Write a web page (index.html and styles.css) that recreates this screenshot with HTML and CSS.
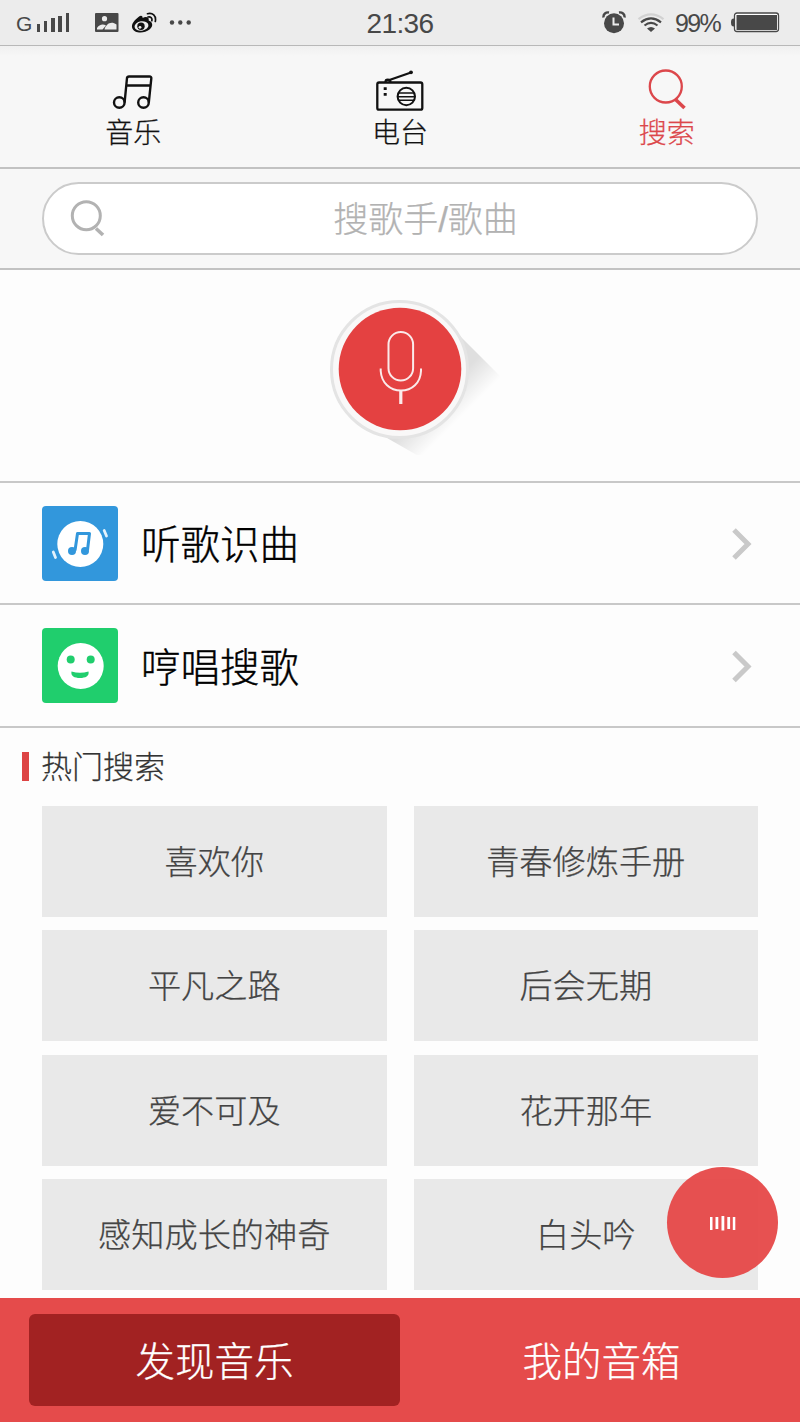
FILE: index.html
```
<!DOCTYPE html>
<html lang="zh-CN">
<head>
    <meta charset="UTF-8">
    <meta name="viewport" content="width=device-width, initial-scale=1.0">
    <title>搜索</title>
    <link rel="stylesheet" href="styles.css">
</head>
<body>

<!-- Status bar -->
<div class="status-bar">
    <div class="status-left">
        <span class="network">G</span>
        <svg class="signal" width="34" height="22" viewBox="0 0 34 22" fill="#484848">
            <rect x="1" y="12" width="3" height="8"/>
            <rect x="8" y="9" width="3" height="11"/>
            <rect x="15" y="6" width="4" height="14"/>
            <rect x="22" y="4" width="4" height="16"/>
            <rect x="30" y="1" width="3" height="19"/>
        </svg>
        <svg class="picture" width="24" height="20" viewBox="0 0 24 20">
            <rect width="23.5" height="19" rx="1" fill="#484848"/>
            <circle cx="9.5" cy="5.7" r="2.6" fill="#ececec"/>
            <path d="M2 16.500V15C4 11.500 8 10.500 11 12.500L7.500 16.500zM9.500 16.500C11 11 16 7.500 21.500 11.500V16.500z" fill="#ececec"/>
        </svg>
        <svg class="weibo" width="26" height="22" viewBox="0 0 26 22" fill="none">
            <path d="M7.500 5C9.500 3.200 11.500 3 11.700 6C14 4.500 18.500 4.500 17.700 8.500C22 10 22.500 14.500 18.500 17.500C13 22 3 21.500 1.200 16C0 12 3.500 8 7.500 5z" fill="#111"/>
            <ellipse cx="10.500" cy="14" rx="7" ry="4.700" fill="#ececec" transform="rotate(-8 10.500 14)"/>
            <circle cx="10" cy="14.300" r="3.700" fill="#111"/>
            <circle cx="9" cy="15.300" r="1.400" fill="#ececec"/>
            <path d="M16.500 1.700C21.500.2 25.500 4 24.300 9.500M17 5C19.500 4.300 21.500 6 20.800 8.700" stroke="#111" stroke-width="1.700" stroke-linecap="round"/>
        </svg>
        <svg class="more" width="24" height="6" viewBox="0 0 24 6" fill="#484848">
            <circle cx="3" cy="2.500" r="2.200"/>
            <circle cx="11.300" cy="2.500" r="2.200"/>
            <circle cx="19.700" cy="2.500" r="2.200"/>
        </svg>
    </div>
    <div class="time">21:36</div>
    <div class="status-right">
        <svg class="alarm" width="24" height="24" viewBox="0 0 24 24">
            <circle cx="12" cy="12.300" r="10" fill="#484848"/>
            <path d="M1.500 6.500C1 3 4 1 7 1.500M17 1.500C20 1 23 3 22.500 6.500" fill="none" stroke="#484848" stroke-width="2.400"/>
            <path d="M11.500 6.500V13.500H17" fill="none" stroke="#ececec" stroke-width="2"/>
        </svg>
        <svg class="wifi" width="28" height="20" viewBox="0 0 28 20" fill="none" stroke="#484848" stroke-width="2.200">
            <path d="M1.500 6.200Q14 -3.500 26.500 6.200" stroke="#d2d2d2"/>
            <path d="M4 9.300Q14 1.500 24 9.300"/>
            <path d="M7.500 12.500Q14 7.300 20.500 12.500"/>
            <path d="M10 15.500Q14 12.300 18 15.500L14 19z" fill="#484848" stroke="none"/>
        </svg>
        <span class="percent">99%</span>
        <svg class="battery" width="50" height="21" viewBox="0 0 50 21">
            <path d="M4 6.500C1.500 6.500 1 8 1 10.500S1.500 14.500 4 14.500z" fill="#484848"/>
            <rect x="4.500" y="1" width="44" height="18.500" rx="2.500" fill="#fff" stroke="#484848" stroke-width="1.300"/>
            <rect x="6.500" y="3" width="40.500" height="15" fill="#484848"/>
        </svg>
    </div>
</div>

<!-- Top tabs -->
<div class="tabs">
    <a class="tab">
        <svg width="56" height="46" viewBox="0 0 56 46" fill="none" stroke="#111" stroke-width="2.400" stroke-linejoin="round">
            <circle cx="14.300" cy="34.500" r="5.300"/>
            <circle cx="38.500" cy="34.500" r="5.300"/>
            <path d="M19.600 34.500L22 10Q22.200 8.500 24 8.500H44.500Q46.500 8.500 46.300 10.500L43.800 34.500M21.300 17.500H45.500"/>
        </svg>
        <span>音乐</span>
    </a>
    <a class="tab">
        <svg width="56" height="46" viewBox="0 0 56 46" fill="none" stroke="#111" stroke-width="2.300">
            <rect x="5.300" y="14.500" width="45" height="27.200" rx="1.800"/>
            <path d="M13.500 14C13.500 11 18 11 18.500 14M16 12.500L39 4.500"/>
            <circle cx="39" cy="4.300" r="1.900" fill="#111" stroke="none"/>
            <circle cx="34.300" cy="28.500" r="8.700" stroke-width="2"/>
            <path d="M26.300 25H42.300M25.600 28.700H43M26.300 32.300H42.300" stroke-width="1.400"/>
            <path d="M11.700 20.700H14.700M11.700 26.300H14.700" stroke-width="2.800"/>
        </svg>
        <span>电台</span>
    </a>
    <a class="tab active">
        <svg width="56" height="46" viewBox="0 0 56 46" fill="none" stroke="#dc474b" stroke-width="2.300">
            <circle cx="26.800" cy="18.500" r="16"/>
            <path d="M36 31L45.500 40" stroke-width="3.600"/>
        </svg>
        <span>搜索</span>
    </a>
</div>

<!-- Search box -->
<div class="search">
    <div class="search-box">
        <svg width="36" height="38" viewBox="0 0 36 38" fill="none" stroke="#b2b2b2">
            <circle cx="16.300" cy="15.700" r="14" stroke-width="3"/>
            <path d="M26 28.500L33 35" stroke-width="3.600"/>
        </svg>
        <span>搜歌手/歌曲</span>
    </div>
</div>

<!-- Voice search -->
<div class="voice">
    <svg width="220" height="170" viewBox="0 0 220 170">
        <defs>
            <linearGradient id="shadow" gradientUnits="userSpaceOnUse" x1="110" y1="85" x2="164" y2="139">
                <stop offset="0.600" stop-color="#000" stop-opacity="0.120"/>
                <stop offset="1" stop-color="#000" stop-opacity="0"/>
            </linearGradient>
        </defs>
        <path d="M157 38L212 93L132 173L62 133z" fill="url(#shadow)"/>
        <circle cx="109.500" cy="84.500" r="68" fill="#f9f8f8" stroke="#e4e4e4" stroke-width="3"/>
        <circle cx="110" cy="84" r="61.300" fill="#e44141"/>
        <g fill="none" stroke="#fbeaea" stroke-width="2">
            <rect x="98.500" y="47" width="24.600" height="48.500" rx="12.300"/>
            <path d="M90.700 83.500V86C91.500 98 100 105.500 111 105.500S130.500 98 131 86V83.500"/>
            <path d="M110.800 105V119" stroke-width="3.200"/>
        </g>
    </svg>
</div>

<!-- Recognition entries -->
<div class="entry">
    <svg class="entry-icon" width="76" height="75" viewBox="0 0 76 75">
        <rect width="76" height="75" rx="4" fill="#3297dc"/>
        <circle cx="38.300" cy="38" r="23" fill="#fff"/>
        <path d="M33 44.500L35.500 27.500H47.500L45.500 44" fill="none" stroke="#3297dc" stroke-width="3" stroke-linejoin="round"/>
        <circle cx="30" cy="45" r="4" fill="#3297dc"/>
        <circle cx="43" cy="45" r="4" fill="#3297dc"/>
        <path d="M62.200 24.500L64.500 30M11.300 46L13.500 51.500" stroke="#e3f2fc" stroke-width="2.800" stroke-linecap="round"/>
    </svg>
    <span class="entry-name">听歌识曲</span>
    <svg class="arrow" width="22" height="34" viewBox="0 0 22 34" fill="none" stroke="#c9c9c9" stroke-width="5">
        <path d="M4 4L18 18L4 32"/>
    </svg>
</div>
<div class="entry">
    <svg class="entry-icon" width="76" height="75" viewBox="0 0 76 75">
        <rect width="76" height="75" rx="4" fill="#20ce6d"/>
        <circle cx="38.700" cy="38" r="23" fill="#fff"/>
        <circle cx="28.700" cy="31.500" r="4" fill="#20ce6d"/>
        <circle cx="48.700" cy="31.500" r="4" fill="#20ce6d"/>
        <path d="M29.500 43.500Q38 46 46.500 43.500C47.500 48 43.500 50 38 50S28.500 48 29.500 43.500z" fill="#20ce6d"/>
    </svg>
    <span class="entry-name">哼唱搜歌</span>
    <svg class="arrow" width="22" height="34" viewBox="0 0 22 34" fill="none" stroke="#c9c9c9" stroke-width="5">
        <path d="M4 3.500L18 17.500L4 31.500"/>
    </svg>
</div>

<!-- Hot searches -->
<div class="hot">
    <h2>热门搜索</h2>
    <div class="hot-grid">
        <div class="hot-item">喜欢你</div>
        <div class="hot-item">青春修炼手册</div>
        <div class="hot-item">平凡之路</div>
        <div class="hot-item">后会无期</div>
        <div class="hot-item">爱不可及</div>
        <div class="hot-item">花开那年</div>
        <div class="hot-item">感知成长的神奇</div>
        <div class="hot-item">白头吟</div>
    </div>
</div>

<!-- Floating player button -->
<div class="player">
    <svg width="28" height="16" viewBox="0 0 28 16" fill="#fff">
        <rect x="1" y="2" width="2.500" height="13"/>
        <rect x="6.500" y="2" width="2.800" height="12"/>
        <rect x="12.500" y="1" width="2.800" height="14.500"/>
        <rect x="18.300" y="2" width="2.800" height="12"/>
        <rect x="23.800" y="2" width="2.500" height="13"/>
    </svg>
</div>

<!-- Bottom navigation -->
<div class="bottom-nav">
    <a class="nav-btn selected">发现音乐</a>
    <a class="nav-btn">我的音箱</a>
</div>

</body>
</html>
```

FILE: styles.css
```
* {
    box-sizing: border-box;
}

body {
    font-family: "Liberation Sans", "Noto Sans CJK SC", sans-serif;
    font-weight: 300;
    -webkit-text-stroke: 0.25px;
    margin: 0;
    position: relative;
    width: 800px;
    height: 1422px;
    display: flex;
    flex-direction: column;
    background-color: #fdfdfd;
    color: #111;
    overflow: hidden;
}

svg {
    display: block;
    flex-shrink: 0;
}

/* Status bar */
.status-bar {
    height: 46px;
    display: grid;
    grid-template-columns: 1fr 80px 1fr;
    align-items: center;
    background-color: #ececec;
    border-bottom: 1px solid #b8b8b8;
    color: #484848;
    -webkit-text-stroke: 0;
}

.status-left {
    display: flex;
    align-items: center;
    padding-left: 16px;
}

.network {
    width: 20px;
    font-size: 21px;
    line-height: 20px;
    padding-top: 3px;
}

.picture {
    margin-left: 25px;
}

.weibo {
    margin-left: 12px;
}

.more {
    margin-left: 12px;
}

.time {
    padding-top: 2px;
    font-size: 28px;
    letter-spacing: -0.6px;
    text-align: center;
}

.status-right {
    display: flex;
    align-items: center;
    justify-content: flex-end;
    padding-right: 20px;
}

.wifi {
    margin: 0 10px 0 11px;
}

.percent {
    width: 55px;
    padding-top: 1px;
    font-size: 25px;
    letter-spacing: -1.6px;
}

/* Top tabs */
.tabs {
    height: 123px;
    display: grid;
    grid-template-columns: repeat(3, 1fr);
    background: linear-gradient(#f0f0f0, #f7f7f7 10px);
    border-bottom: 2px solid #c2c2c2;
}

.tab {
    display: flex;
    flex-direction: column;
    align-items: center;
    padding-top: 22px;
    font-size: 28px;
    line-height: 39px;
}

.tab.active {
    color: #dc474b;
}

/* Search box */
.search {
    height: 101px;
    padding: 13px 42px 0;
    background-color: #f7f7f7;
    border-bottom: 2px solid #c2c2c2;
}

.search-box {
    height: 73px;
    display: flex;
    align-items: center;
    padding: 0 27px 0 26px;
    background-color: #fff;
    border: 2px solid #cbcbcb;
    border-radius: 37px;
}

.search-box span {
    flex: 1;
    padding: 2px 0 0 16px;
    font-size: 35px;
    line-height: 40px;
    text-align: center;
    color: #b2b2b2;
}

/* Voice search */
.voice {
    height: 213px;
    display: flex;
    justify-content: center;
    padding-top: 15px;
    border-bottom: 2px solid #c8c8c8;
}

/* Recognition entries */
.entry {
    height: 122px;
    display: flex;
    align-items: center;
    padding: 0 48px 0 42px;
    border-bottom: 2px solid #c8c8c8;
}

.entry + .entry {
    height: 123px;
}

.entry-name {
    flex: 1;
    padding: 4px 0 0 23px;
    font-size: 39.5px;
    line-height: 50px;
    color: #000;
    -webkit-text-stroke: 0.4px;
}

/* Hot searches */
.hot {
    height: 570px;
    padding: 24px 42px 0 22px;
}

.hot h2 {
    margin: 0;
    height: 29px;
    padding-left: 12px;
    border-left: 7px solid #dd4444;
    font-size: 31px;
    font-weight: 300;
    line-height: 32px;
    color: #333;
}

.hot-grid {
    display: grid;
    grid-template-columns: 1fr 1fr;
    gap: 13.4px 27px;
    padding: 25px 0 0 20px;
}

.hot-item {
    height: 111px;
    display: flex;
    align-items: center;
    justify-content: center;
    padding-bottom: 4px;
    background-color: #e9e9e9;
    color: #444;
    font-size: 33.2px;
}

/* Floating player button */
.player {
    position: absolute;
    right: 22px;
    bottom: 144px;
    width: 111px;
    height: 111px;
    display: flex;
    align-items: center;
    justify-content: center;
    border-radius: 50%;
    background-color: rgba(230, 72, 72, 0.95);
}

/* Bottom navigation */
.bottom-nav {
    height: 124px;
    display: grid;
    grid-template-columns: 371px 1fr;
    gap: 8px;
    padding: 16px 5px 16px 29px;
    background-color: #e54b4b;
}

.nav-btn {
    display: flex;
    align-items: center;
    justify-content: center;
    padding-bottom: 4px;
    border-radius: 6px;
    color: #fff;
    font-size: 39.5px;
}

.nav-btn.selected {
    background-color: #a22222;
}
```
